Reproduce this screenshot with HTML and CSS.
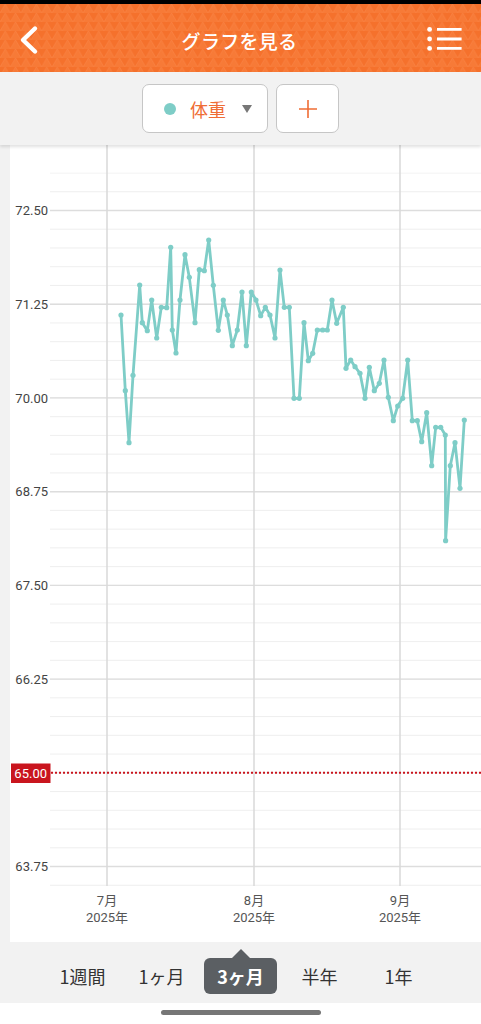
FILE: index.html
```html
<!DOCTYPE html>
<html lang="ja">

<head>
    <meta charset="UTF-8">
    <meta name="viewport" content="width=device-width, initial-scale=1.0">
    <title>グラフを見る</title>
    <link rel="stylesheet" href="styles.css">
</head>

<body>

    <div class="status"></div>

    <header class="appbar">
        <svg class="appbar-pattern" aria-hidden="true">
            <defs>
                <pattern id="tri" width="10.4" height="9" patternUnits="userSpaceOnUse">
                    <path d="M0 9 L5.2 0 L10.4 9 Z" fill="#f77a37" />
                    <path d="M0 9 L5.2 0 L10.4 9" fill="none" stroke="#f9874a" stroke-width="0.5" />
                </pattern>
            </defs>
            <rect width="100%" height="100%" fill="url(#tri)" />
        </svg>
        <button class="icon-btn back" aria-label="戻る">
            <svg width="24" height="32" viewBox="0 0 24 32">
                <path d="M19 4.5 L7 16 L19 27.5" fill="none" stroke="#fff" stroke-width="4.4" stroke-linecap="round" stroke-linejoin="round" />
            </svg>
        </button>
        <h1 class="title">グラフを見る</h1>
        <button class="icon-btn menu" aria-label="メニュー">
            <svg width="36" height="24" viewBox="0 0 36 24">
                <circle cx="2.6" cy="2.4" r="2.4" fill="#fff" />
                <circle cx="2.6" cy="12" r="2.4" fill="#fff" />
                <circle cx="2.6" cy="21.4" r="2.4" fill="#fff" />
                <path d="M10 2.4 H34.6 M10 12 H34.6 M10 21.4 H34.6" stroke="#fff" stroke-width="2.8" />
            </svg>
        </button>
    </header>

    <div class="toolbar">
        <button class="select">
            <span class="select-dot"></span>
            <span class="select-label">体重</span>
            <span class="select-caret"></span>
        </button>
        <button class="add" aria-label="追加">
            <svg width="20" height="20" viewBox="0 0 20 20">
                <path d="M10 1 V19 M1 10 H19" stroke="#ef6d35" stroke-width="1.6" />
            </svg>
        </button>
    </div>

    <main class="chart-wrap">
        <div class="chart-card">
            <svg class="chart" width="471" height="797" viewBox="10 145 471 797">
                <defs>
                    <pattern id="minor" x="0" y="172.5" width="10" height="18.744" patternUnits="userSpaceOnUse">
                        <rect width="10" height="1" fill="#eeeeee" />
                    </pattern>
                    <marker id="dot" viewBox="0 0 6 6" refX="3" refY="3" markerWidth="6" markerHeight="6" markerUnits="userSpaceOnUse">
                        <circle cx="3" cy="3" r="2.6" fill="#7ecdc7" />
                    </marker>
                </defs>

                <!-- grid -->
                <rect x="50" y="172.5" width="431" height="714" fill="url(#minor)" />
                <g class="grid-major">
                    <line x1="50" x2="481" y1="210.5" y2="210.5" />
                    <line x1="50" x2="481" y1="304.2" y2="304.2" />
                    <line x1="50" x2="481" y1="397.9" y2="397.9" />
                    <line x1="50" x2="481" y1="491.7" y2="491.7" />
                    <line x1="50" x2="481" y1="585.4" y2="585.4" />
                    <line x1="50" x2="481" y1="679.1" y2="679.1" />
                    <line x1="50" x2="481" y1="866.5" y2="866.5" />
                </g>
                <g class="grid-month">
                    <line x1="107" x2="107" y1="145" y2="886" />
                    <line x1="254" x2="254" y1="145" y2="886" />
                    <line x1="400" x2="400" y1="145" y2="886" />
                </g>

                <!-- y axis -->
                <g class="axis-y">
                    <text x="48" y="215.2">72.50</text>
                    <text x="48" y="308.9">71.25</text>
                    <text x="48" y="402.6">70.00</text>
                    <text x="48" y="496.4">68.75</text>
                    <text x="48" y="590.1">67.50</text>
                    <text x="48" y="683.8">66.25</text>
                    <text x="48" y="871.2">63.75</text>
                </g>

                <!-- x axis -->
                <g class="axis-x">
                    <text x="107" y="904.5">7月</text>
                    <text x="107" y="921.5">2025年</text>
                    <text x="254" y="904.5">8月</text>
                    <text x="254" y="921.5">2025年</text>
                    <text x="400" y="904.5">9月</text>
                    <text x="400" y="921.5">2025年</text>
                </g>

                <!-- target -->
                <line class="target-line" x1="51" x2="481" y1="772.8" y2="772.8" />
                <rect class="target-box" x="11" y="763.5" width="39.5" height="19.5" />
                <text class="target-text" x="30.7" y="777.6">65.00</text>

                <!-- weight -->
                <polyline class="series" points="
                    121,315 125.3,390.7 129,442.7 133,375.3 139.7,285 142.3,322.7 147.3,330.7 151.7,300
                    156.7,338 161.3,307.3 166.7,307.7 170.7,247.3 172.3,330 176,353 180,300 185,254.7
                    189.3,277.3 195,322.7 199.3,269.7 204.3,270.7 208.7,240 213.3,285.3 218.3,330.3
                    223.3,300 227.3,315 232.3,345.7 237.3,330 242,292 246.3,345.7 251.3,292 256,300
                    260.7,315.7 265.3,307.3 270,315 275,338 280,270 284.3,307.3 289.3,307.3 294,398.3
                    299.3,398.3 304,322.7 308.3,360.7 312.7,353.3 317.3,330 322.7,330 327.3,330 332,300
                    336.7,323.3 343.3,307.3 346,368.3 350.7,360 355,366.7 360,373.3 365,398.3 369.3,367.3
                    374.3,390.7 379.3,383.3 384,360 388.3,397.3 393.3,420.7 397.7,406 402.7,398.3 407.7,360
                    412.3,420.7 417.3,420.7 421.7,441.7 426.7,412.7 431.7,465.7 435.7,427.3 440.7,427.3
                    445.3,435 445.6,540.7 450.3,465.7 455,442.7 460,488.3 464.3,420" />
            </svg>
        </div>
    </main>

    <nav class="range">
        <button class="range-item">1週間</button>
        <button class="range-item">1ヶ月</button>
        <button class="range-item active">3ヶ月</button>
        <button class="range-item">半年</button>
        <button class="range-item">1年</button>
    </nav>

    <div class="home">
        <span class="home-bar"></span>
    </div>

</body>

</html>
```

FILE: styles.css
```css
body {
    margin: 0;
    width: 481px;
    font-family: Roboto, "Noto Sans CJK JP", sans-serif;
    background-color: #fff;
}

button {
    font-family: inherit;
    cursor: pointer;
}

.status {
    height: 4px;
    background-color: #000;
}

/* orange app bar */
.appbar {
    position: relative;
    height: 68px;
    box-sizing: border-box;
    padding: 4px 18px 0 16px;
    display: grid;
    grid-template-columns: 1fr auto 1fr;
    align-items: center;
    background-color: #f5712c;
    overflow: hidden;
}

.appbar-pattern {
    position: absolute;
    left: 0;
    top: 0;
    width: 100%;
    height: 100%;
}

.icon-btn {
    position: relative;
    padding: 0;
    border: none;
    background: none;
    display: flex;
}

.back {
    justify-self: start;
}

.menu {
    justify-self: end;
    margin-top: -2px;
}

.title {
    position: relative;
    margin: 0;
    color: #fff;
    font-family: "Noto Sans CJK JP", sans-serif;
    font-size: 19px;
    font-weight: 500;
    letter-spacing: 0.3px;
}

/* data selector */
.toolbar {
    position: relative;
    height: 73px;
    display: flex;
    align-items: center;
    justify-content: center;
    gap: 8px;
    background-color: #f2f2f2;
    box-shadow: 0 2px 3px rgba(0, 0, 0, 0.12);
    z-index: 1;
}

.select,
.add {
    height: 49px;
    border: 1.5px solid #c6c6c6;
    border-radius: 7px;
    background-color: #fff;
    display: flex;
    align-items: center;
}

.select {
    width: 126px;
    padding: 0 0 0 21px;
}

.add {
    width: 63px;
    justify-content: center;
    padding: 0;
}

.select-dot {
    width: 12px;
    height: 12px;
    border-radius: 50%;
    background-color: #7ecdc7;
}

.select-label {
    margin-left: 14px;
    color: #ef6d35;
    font-family: "Noto Sans CJK JP", sans-serif;
    font-size: 18px;
}

.select-caret {
    margin-left: 16px;
    width: 0;
    height: 0;
    border-left: 5px solid transparent;
    border-right: 5px solid transparent;
    border-top: 8px solid #777;
}

/* chart */
.chart-wrap {
    padding-left: 10px;
    background-color: #f2f2f2;
}

.chart-card {
    height: 797px;
    background-color: #fff;
}

.chart {
    display: block;
}

.grid-major line {
    stroke: #dddddd;
    stroke-width: 1.4;
}

.grid-month line {
    stroke: #d9d9d9;
    stroke-width: 1.5;
}

.axis-y text {
    font-family: Roboto, sans-serif;
    font-size: 13px;
    fill: #444;
    text-anchor: end;
}

.axis-x text {
    font-family: Roboto, "Noto Sans CJK JP", sans-serif;
    font-size: 13px;
    fill: #555;
    text-anchor: middle;
}

.target-line {
    stroke: #c9151e;
    stroke-width: 2;
    stroke-dasharray: 2 2;
}

.target-box {
    fill: #c9151e;
}

.target-text {
    font-family: Roboto, sans-serif;
    font-size: 13px;
    fill: #fff;
    text-anchor: middle;
}

.series {
    fill: none;
    stroke: #7ecdc7;
    stroke-width: 2.8;
    stroke-linejoin: round;
    marker-start: url(#dot);
    marker-mid: url(#dot);
    marker-end: url(#dot);
}

/* range tabs */
.range {
    height: 61px;
    box-sizing: border-box;
    padding-top: 16px;
    display: flex;
    justify-content: center;
    gap: 6px;
    background-color: #f2f2f2;
}

.range-item {
    position: relative;
    width: 73px;
    height: 36px;
    padding: 0;
    border: none;
    border-radius: 6px;
    background: none;
    color: #333;
    font-family: "Noto Sans CJK JP", sans-serif;
    font-size: 18px;
}

.range-item.active {
    background-color: #5b5f63;
    color: #fff;
    font-weight: 700;
}

.range-item.active::before {
    content: "";
    position: absolute;
    left: 50%;
    top: -9px;
    margin-left: -9px;
    border-left: 9px solid transparent;
    border-right: 9px solid transparent;
    border-bottom: 9px solid #5b5f63;
}

.home {
    height: 21px;
    display: flex;
    justify-content: center;
    padding-top: 7px;
    box-sizing: border-box;
}

.home-bar {
    width: 160px;
    height: 5px;
    border-radius: 3px;
    background-color: #767676;
}
```
